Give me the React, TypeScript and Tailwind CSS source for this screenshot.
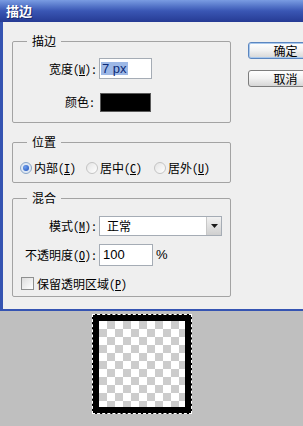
export default function App() {
  const cjk = "font-['Noto_Sans_Mono_CJK_SC','Noto_Sans_CJK_SC',sans-serif]";
  return (
    <div className={`w-[303px] h-[426px] overflow-hidden bg-[#bfbfbf] text-[12px] leading-[14px] text-black ${cjk}`}>
      {/* Dialog */}
      <div className="h-[311px] flex flex-col bg-[#efefef]">
        {/* Title bar */}
        <div className="h-[22px] shrink-0 bg-gradient-to-b from-[#7a9ce2] via-[#3a56b4] to-[#263b94] pl-[6px] flex items-center">
          <span className="text-white font-bold text-[13px] [text-shadow:1px_1px_0_#1a2a70]">描边</span>
        </div>

        {/* Body */}
        <div className="flex-1 flex border-l-[3px] border-b-[2px] border-[#3554b2] pl-[9px]">
          {/* Left column */}
          <div className="w-[219px] shrink-0">
            {/* Stroke group */}
            <fieldset className="mt-[12px] border border-[#a3a3a3] rounded-[2px] pb-[10px]">
              <legend className="ml-[14px] px-[5px] leading-[14px]">描边</legend>
              <div className="mt-[10px] h-[21px] flex items-center">
                <span className="w-[84px] text-right">
                  宽度(<span className="underline">W</span>):
                </span>
                <div className="ml-[2px] w-[53px] h-[21px] bg-white border border-[#a5acb5] flex items-center pl-[1px]">
                  <span className="bg-[#9db8e6] text-[#0b2a78] font-['Liberation_Sans',sans-serif] text-[13px] leading-[13px] px-[1px]">7 px</span>
                </div>
              </div>
              <div className="mt-[13px] h-[20px] flex items-center">
                <span className="w-[84px] text-right pr-[2px]">颜色:</span>
                <div className="ml-[3px] w-[51px] h-[19px] bg-black border border-[#5a5a5a]" />
              </div>
            </fieldset>

            {/* Position group */}
            <fieldset className="mt-[12px] border border-[#a3a3a3] rounded-[2px] pb-[7px]">
              <legend className="ml-[14px] px-[5px] leading-[14px]">位置</legend>
              <div className="mt-[12px] h-[14px] flex items-center pl-[7px]">
                <Radio checked label="内部" mnemonic="I" width="w-[52px]" />
                <Radio label="居中" mnemonic="C" width="w-[54px]" />
                <Radio label="居外" mnemonic="U" width="w-[50px]" />
              </div>
            </fieldset>

            {/* Blend group */}
            <fieldset className="mt-[8px] border border-[#a3a3a3] rounded-[2px] pb-[6px]">
              <legend className="ml-[14px] px-[5px] leading-[14px]">混合</legend>
              <div className="mt-[11px] h-[20px] flex items-center">
                <span className="w-[84px] text-right">
                  模式(<span className="underline">M</span>):
                </span>
                <div className="ml-[2px] w-[123px] h-[20px] bg-white border border-[#a5acb5] flex items-center">
                  <span className="flex-1 pl-[7px]">正常</span>
                  <div className="w-[15px] h-[18px] mr-[0px] border-l border-[#c8c8c8] bg-gradient-to-b from-[#f2f2f2] to-[#cfcfcf] flex items-center justify-center">
                    <svg width="7" height="4" viewBox="0 0 7 4">
                      <path d="M0 0H7L3.5 4Z" fill="#1a1a1a" />
                    </svg>
                  </div>
                </div>
              </div>
              <div className="mt-[8px] h-[22px] flex items-center">
                <span className="w-[84px] text-right">
                  不透明度(<span className="underline">O</span>):
                </span>
                <div className="ml-[2px] w-[54px] h-[22px] bg-white border border-[#a5acb5] flex items-center pl-[3px] font-['Liberation_Sans',sans-serif] text-[13px]">
                  100
                </div>
                <span className="ml-[3px] font-['Liberation_Sans',sans-serif] text-[13px]">%</span>
              </div>
              <div className="mt-[11px] h-[13px] flex items-center pl-[8px]">
                <div className="w-[13px] h-[13px] border border-[#8e8f8f] bg-gradient-to-br from-[#dcdcdc] to-white" />
                <span className="ml-[3px]">
                  保留透明区域(<span className="underline">P</span>)
                </span>
              </div>
            </fieldset>
          </div>

          {/* Buttons */}
          <div className="ml-[17px] w-[75px] shrink-0 pt-[20px] flex flex-col">
            <button className="h-[17px] rounded-[3px] border border-[#5b86c0] bg-gradient-to-b from-white via-[#f1f1f1] to-[#d6d6d6] shadow-[inset_0_0_0_1px_#a9c8ec] leading-[15px]">
              确定
            </button>
            <button className="mt-[11px] h-[17px] rounded-[3px] border border-[#7d7d7d] bg-gradient-to-b from-white via-[#f1f1f1] to-[#d6d6d6] leading-[15px]">
              取消
            </button>
          </div>
        </div>
      </div>

      {/* Preview */}
      <div className="ml-[92px] mt-[3px] w-[100px] h-[100px] bg-black p-[7px] outline outline-1 outline-dashed outline-white -outline-offset-1">
        <div className="w-full h-full bg-[conic-gradient(#cccccc_90deg,#ffffff_90deg_180deg,#cccccc_180deg_270deg,#ffffff_270deg)] bg-[length:16px_16px]" />
      </div>
    </div>
  );
}

function Radio({
  checked,
  label,
  mnemonic,
  width,
}: {
  checked?: boolean;
  label: string;
  mnemonic: string;
  width: string;
}) {
  return (
    <div className="flex items-center">
      <div
        className={`w-[12px] h-[12px] rounded-full border flex items-center justify-center ${
          checked ? "border-[#8aa6c8] bg-[#dfe8f3]" : "border-[#c4c4c4] bg-gradient-to-br from-[#e4e4e4] to-white"
        }`}
      >
        {checked && <div className="w-[6px] h-[6px] rounded-full bg-[radial-gradient(circle_at_35%_35%,#6fa0ef,#1d4fb8)]" />}
      </div>
      <span className={`ml-[2px] ${width}`}>
        {label}(<span className="underline">{mnemonic}</span>)
      </span>
    </div>
  );
}
